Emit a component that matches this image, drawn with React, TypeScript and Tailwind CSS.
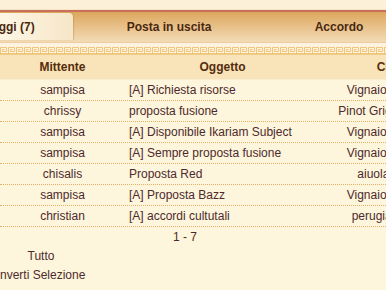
import React from "react";

const rows = [
  { m: "sampisa", o: "[A] Richiesta risorse", c: "Vignaiolo Rosso" },
  { m: "chrissy", o: "proposta fusione", c: "Pinot Grigio Veneto" },
  { m: "sampisa", o: "[A] Disponibile Ikariam Subject", c: "Vignaiolo Rosso" },
  { m: "sampisa", o: "[A] Sempre proposta fusione", c: "Vignaiolo Rosso" },
  { m: "chisalis", o: "Proposta Red", c: "aiuola verde" },
  { m: "sampisa", o: "[A] Proposta Bazz", c: "Vignaiolo Rosso" },
  { m: "christian", o: "[A] accordi cultutali", c: "perugia centro" },
];

function GreekKey() {
  return (
    <svg width="100%" height="7" className="block">
      <defs>
        <pattern id="gk" x="0" y="0" width="8" height="7" patternUnits="userSpaceOnUse">
          <path
            d="M0 6.5 H8 M0.5 6.5 V0.5 H6.5 V4.5 H2.5 V2.5 H4.5"
            fill="none"
            stroke="#efc67c"
            strokeWidth="1"
          />
        </pattern>
      </defs>
      <rect width="100%" height="7" fill="url(#gk)" />
    </svg>
  );
}

export default function App() {
  return (
    <div className="relative w-[386px] h-[290px] overflow-hidden bg-[#fdf5dc] font-['Liberation_Sans',Arial,sans-serif] text-[12px]">
      <div className="h-[10px] bg-[#fcf0d9] border-b border-[#f6e2c4]" />
      <div className="h-[2px] bg-[#c8705a]" />
      <div className="flex h-[30px] w-[520px] bg-gradient-to-b from-[#dca75c] to-[#f3dbb6] ml-[-60px]">
        <div className="w-[133px] shrink-0 mt-[1px] h-[27px] bg-gradient-to-r from-[#fdf6e4] via-[#fdf5e2] to-[#f6e6c8] rounded-tr-[4px] pl-[22px] flex items-center font-bold text-[#4a2810] shadow-[1px_0_1px_rgba(170,120,60,0.35)]">
          Messaggi (7)
        </div>
        <div className="w[192px] w-[192px] shrink-0 flex items-center justify-center font-bold text-[#4a2810]">
          Posta in uscita
        </div>
        <div className="w-[148px] shrink-0 flex items-center justify-center font-bold text-[#4a2810]">
          Accordo
        </div>
      </div>
      <div className="h-[1px] bg-[#eecf9c]" />
      <div className="h-[4px] bg-[#fdf3de]" />
      <div className="bg-[#fdf1d8]">
        <GreekKey />
      </div>
      <div className="h-[1px] bg-[#efca86]" />
      <div className="flex h-[25px] bg-[#f9e3b8] border-b border-[#fbecd0] font-bold text-[#542c0e] w-[520px]">
        <div className="w-[125px] shrink-0 flex items-center justify-center">Mittente</div>
        <div className="w-[195px] shrink-0 flex items-center justify-center">Oggetto</div>
        <div className="w-[140px] shrink-0 flex items-center justify-center">Città</div>
      </div>
      {rows.map((r, i) => (
        <div
          key={i}
          className="flex h-[21px] border-b border-dotted border-[#e6b064] text-[#4e2a2c] w-[520px]"
        >
          <div className="w-[125px] shrink-0 flex items-center justify-center">{r.m}</div>
          <div className="w-[195px] shrink-0 flex items-center pl-[4px] whitespace-nowrap">{r.o}</div>
          <div className="w-[140px] shrink-0 flex items-center justify-center whitespace-nowrap">{r.c}</div>
        </div>
      ))}
      <div className="h-[20px] w-[370px] flex items-center justify-center text-[#4e2a2c]">1 - 7</div>
      <div className="h-[18px] w-[82px] flex items-center justify-center text-[#4e2a2c]">Tutto</div>
      <div className="h-[19px] w-[82px] flex items-center justify-center text-[#4e2a2c] whitespace-nowrap">
        Inverti Selezione
      </div>
    </div>
  );
}
